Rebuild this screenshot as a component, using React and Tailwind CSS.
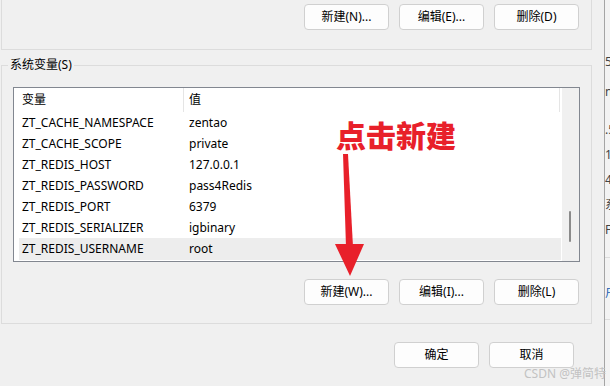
const rows = [
  ["ZT_CACHE_NAMESPACE", "zentao"],
  ["ZT_CACHE_SCOPE", "private"],
  ["ZT_REDIS_HOST", "127.0.0.1"],
  ["ZT_REDIS_PASSWORD", "pass4Redis"],
  ["ZT_REDIS_PORT", "6379"],
  ["ZT_REDIS_SERIALIZER", "igbinary"],
  ["ZT_REDIS_USERNAME", "root"],
];

const WinButton = ({ children }) => (
  <button className="w-[85px] h-[26px] bg-[#fdfdfd] border border-[#d0d0d0] rounded-[4px] text-[12px] leading-none text-black flex items-center justify-center">
    {children}
  </button>
);

const App = () => {
  return (
    <div className="relative w-[610px] h-[386px] overflow-hidden bg-[#f0f0f0] flex text-[12px] text-black font-['Noto_Sans','Noto_Sans_CJK_SC',sans-serif]">
      {/* dialog */}
      <div className="w-[605px] shrink-0 border-r border-[#a5a5a5] pl-[1px] flex flex-col">
        {/* user variables group (cut off) */}
        <div className="w-[591px] h-[50px] shrink-0 border-l border-r border-b border-[#dcdcdc] flex justify-end gap-[10px] pt-[4px] pr-[12px]">
          <WinButton>新建(N)...</WinButton>
          <WinButton>编辑(E)...</WinButton>
          <WinButton>删除(D)</WinButton>
        </div>

        {/* system variables group */}
        <div className="relative mt-[15px] w-[591px] h-[259px] shrink-0 border border-[#dcdcdc] pt-[21px] pl-[11px]">
          <span className="absolute left-[6px] -top-[9px] px-[2px] bg-[#f0f0f0] leading-[16px]">系统变量(S)</span>

          <div className="w-[567px] h-[175px] border border-[#828790] bg-white flex">
            <div className="flex-1 flex flex-col">
              <div className="h-[24px] flex items-stretch mr-[1px] border-r border-[#e5e5e5]">
                <div className="w-[170px] pl-[8px] border-r border-[#e5e5e5] flex items-center">变量</div>
                <div className="flex-1 pl-[5px] flex items-center">值</div>
              </div>
              {rows.map(([name, value], i) => (
                <div
                  key={name}
                  className={`ml-[5px] flex items-center ${i === rows.length - 1 ? "bg-[#ededed] h-[22px]" : "h-[21px]"}`}
                >
                  <div className="w-[170px] pl-[3px]">{name}</div>
                  <div>{value}</div>
                </div>
              ))}
            </div>
            {/* scrollbar */}
            <div className="w-[17px] shrink-0 bg-[#f0f0f0] ml-[1px] pt-[123px] pl-[7px]">
              <div className="w-[2px] h-[31px] bg-[#8b8b8b] rounded-full" />
            </div>
          </div>

          <div className="mt-[17px] flex justify-end gap-[10px] pr-[12px]">
            <WinButton>新建(W)...</WinButton>
            <WinButton>编辑(I)...</WinButton>
            <WinButton>删除(L)</WinButton>
          </div>
        </div>

        <div className="mt-[18px] flex justify-end gap-[10px] pr-[30px]">
          <WinButton>确定</WinButton>
          <WinButton>取消</WinButton>
        </div>
      </div>

      {/* window behind, mostly hidden */}
      <div className="flex-1 bg-[#f3f3f3] overflow-hidden flex flex-col text-[12px] leading-[16px] text-[#444] whitespace-nowrap">
        <div className="mt-[54px] h-[16px]">5</div>
        <div className="mt-[14px] h-[16px]">n</div>
        <div className="mt-[22px] h-[16px]">.5</div>
        <div className="mt-[9px] h-[16px]">1</div>
        <div className="mt-[9px] h-[16px]">4</div>
        <div className="mt-[9px] h-[16px]">系</div>
        <div className="mt-[9px] h-[16px]">F</div>
        <div className="mt-[19px] h-px bg-[#dcdcdc]" />
        <div className="mt-[27px] h-[16px] text-[#1a5fb4]">户</div>
        <div className="mt-[18px] h-px bg-[#dcdcdc]" />
      </div>

      {/* annotation */}
      <span className="absolute left-[336px] top-[121px] text-[30px] leading-[30px] font-black text-[#e8202a]">
        点击新建
      </span>
      <svg className="absolute left-0 top-0 pointer-events-none" width="610" height="386" viewBox="0 0 610 386">
        <polygon points="343,154 348,154 353,247 346,247" fill="#e8202a" />
        <polygon points="335,244 364,244 350,276" fill="#e8202a" />
      </svg>

      <span className="absolute right-[4px] bottom-[5px] text-[12px] leading-[14px] text-[#c2c2c2]">
        CSDN @弹简特
      </span>
    </div>
  );
};

export default App;
